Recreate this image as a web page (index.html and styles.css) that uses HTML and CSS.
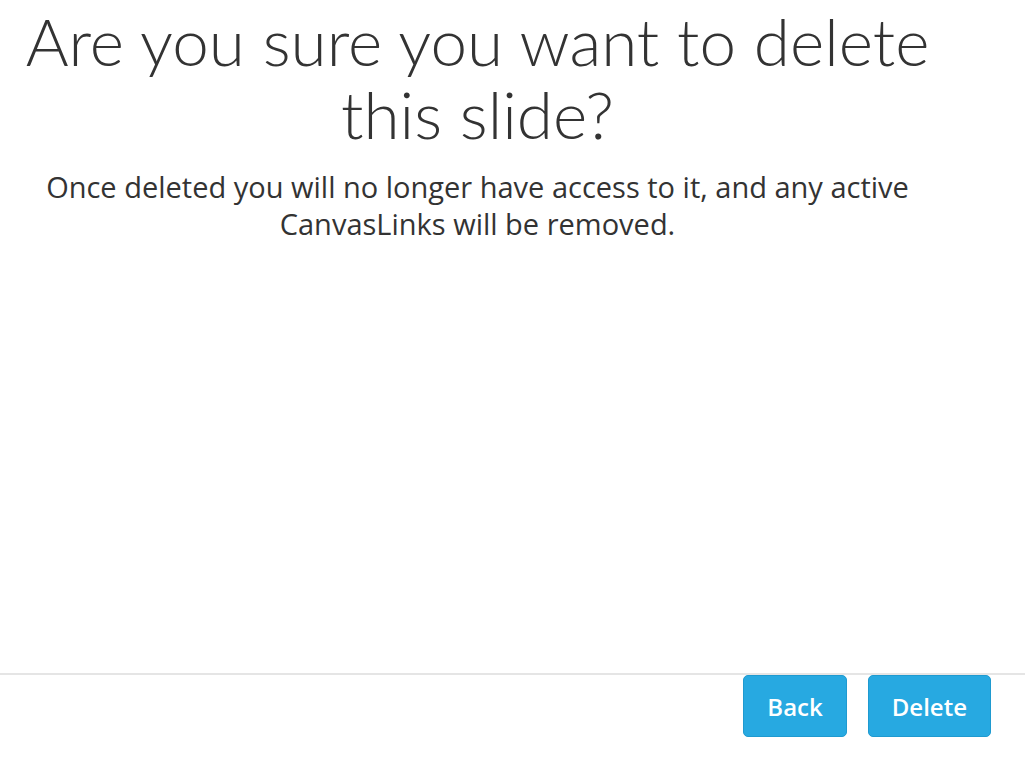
FILE: index.html
```html
<!DOCTYPE html>
<html>
<head>
<meta charset="utf-8">
<link rel="stylesheet" href="styles.css">
</head>
<body>
<div class="dialog">
  <div class="content">
    <h1 class="title">Are you sure you want to delete this slide?</h1>
    <p class="message">Once deleted you will no longer have access to it, and any active CanvasLinks will be removed.</p>
  </div>
  <div class="footer">
    <button class="btn">Back</button>
    <button class="btn">Delete</button>
  </div>
</div>
</body>
</html>
```
FILE: styles.css
```css
html, body {
  margin: 0;
  padding: 0;
  background: #ffffff;
}
.dialog {
  width: 1025px;
  height: 762px;
  display: flex;
  flex-direction: column;
}
.content {
  width: 955px;
  flex: 1;
  text-align: center;
  padding-top: 4px;
}
.title {
  margin: 0;
  font-family: Lato, sans-serif;
  font-weight: 300;
  font-size: 65.6px;
  line-height: 73px;
  color: #333333;
}
.message {
  margin: 18px 0 0;
  font-family: "Open Sans", sans-serif;
  font-size: 29px;
  line-height: 37px;
  color: #333333;
}
.footer {
  border-top: 2px solid #e5e5e5;
  height: 89px;
  display: flex;
  justify-content: flex-end;
  align-items: flex-start;
  gap: 21px;
  padding: 0 34px 0 0;
  box-sizing: border-box;
}
.btn {
  height: 62px;
  padding: 0 23px;
  background: #27a9e1;
  border: 1px solid #1f9ad0;
  border-radius: 5px;
  color: #ffffff;
  font-family: "Open Sans", sans-serif;
  font-weight: 600;
  font-size: 24px;
}
```
